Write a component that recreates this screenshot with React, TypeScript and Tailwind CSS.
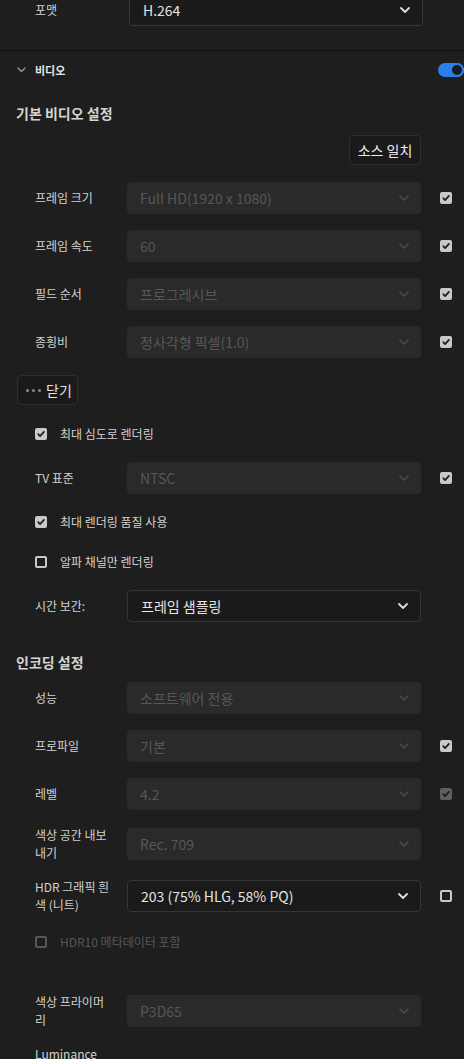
import type { ReactNode } from 'react'

/**
 * Export settings — video panel (dark, Korean UI).
 */

function Chevron({ bright }: { bright?: boolean }) {
  return (
    <svg width="10" height="6" viewBox="0 0 10 6" className={bright ? 'text-[#dcdcdc]' : 'text-[#4e4e4e]'}>
      <path d="M1 1l4 4 4-4" fill="none" stroke="currentColor" strokeWidth={bright ? 1.8 : 1.5} strokeLinecap="round" strokeLinejoin="round" />
    </svg>
  )
}

function Select({ value, disabled, className = '' }: { value: ReactNode; disabled?: boolean; className?: string }) {
  return (
    <div
      className={`w-[294px] h-[32px] shrink-0 flex items-center justify-between pl-[13px] pr-[12px] rounded-[4px] text-[14px] leading-[20px] ${
        disabled
          ? 'bg-[#2a2a2a] text-[#575757]'
          : 'bg-[#1a1a1a] border border-[#363636] text-[#e4e4e4]'
      } ${className}`}
    >
      <span className="truncate">{value}</span>
      <Chevron bright={!disabled} />
    </div>
  )
}

function Check({ checked, disabled }: { checked?: boolean; disabled?: boolean }) {
  if (!checked) {
    return (
      <div
        className={`w-[12px] h-[12px] shrink-0 rounded-[2px] border-2 ${
          disabled ? 'border-[#565656]' : 'border-[#c9c9c9]'
        }`}
      />
    )
  }
  return (
    <div
      className={`w-[12px] h-[12px] shrink-0 rounded-[2px] flex items-center justify-center ${
        disabled ? 'bg-[#5f5f5f]' : 'bg-[#c9c9c9]'
      }`}
    >
      <svg width="10" height="10" viewBox="0 0 10 10">
        <path d="M2.2 5.2l1.9 1.9L7.9 2.9" fill="none" stroke="#1c1c1c" strokeWidth="1.7" strokeLinecap="round" strokeLinejoin="round" />
      </svg>
    </div>
  )
}

function Row({
  label,
  value,
  disabled = true,
  check,
  className = '',
}: {
  label: ReactNode
  value: ReactNode
  disabled?: boolean
  check?: { checked: boolean; disabled?: boolean }
  className?: string
}) {
  // fixed 32px row: two-line labels overflow evenly above and below
  return (
    <div className={`flex items-center h-[32px] pl-[35px] ${className}`}>
      <div className="w-[92px] shrink-0 text-[12px] leading-[18px] text-[#d2d2d2]">{label}</div>
      <Select value={value} disabled={disabled} />
      {check && (
        <div className="ml-[19px]">
          <Check checked={check.checked} disabled={check.disabled} />
        </div>
      )}
    </div>
  )
}

function CheckRow({ label, checked, disabled, className = '' }: { label: string; checked?: boolean; disabled?: boolean; className?: string }) {
  return (
    <div className={`flex items-center h-[20px] pl-[35px] ${className}`}>
      <Check checked={checked} disabled={disabled} />
      <span className={`ml-[13px] text-[12px] leading-[18px] ${disabled ? 'text-[#575757]' : 'text-[#d2d2d2]'}`}>
        {label}
      </span>
    </div>
  )
}

function SectionTitle({ children, className = '' }: { children: ReactNode; className?: string }) {
  return (
    <div className={`pl-[16px] h-[20px] flex items-center text-[14px] leading-[20px] font-bold text-[#d4d4d4] ${className}`}>
      {children}
    </div>
  )
}

export default function App() {
  return (
    <div className="w-full h-[1059px] overflow-hidden bg-[#1e1e1e] font-['Noto_Sans_CJK_KR','Noto_Sans',sans-serif]">
      {/* Format */}
      <div className="flex items-center pl-[35px] -mt-[6px]">
        <div className="w-[94px] shrink-0 text-[12px] leading-[18px] text-[#d2d2d2]">포맷</div>
        <Select value="H.264" />
      </div>

      <div className="mt-[24px] h-px bg-[#0e0e0e]" />

      {/* Video header */}
      <div className="mt-[9px] h-[20px] flex items-center pl-[17px]">
        <svg width="9" height="6" viewBox="0 0 9 6" className="text-[#8c8c8c]">
          <path d="M1 1l3.5 3.5L8 1" fill="none" stroke="currentColor" strokeWidth="1.5" strokeLinecap="round" strokeLinejoin="round" />
        </svg>
        <span className="ml-[9px] text-[11px] font-bold text-[#e6e6e6]">비디오</span>
        <div className="ml-auto w-[26px] h-[14px] rounded-full bg-[#2a7fe8] flex items-center justify-end">
          <div className="w-[14px] h-[14px] rounded-full border-2 border-[#2a7fe8] bg-[#1a1a1a]" />
        </div>
      </div>

      <SectionTitle className="mt-[23px]">기본 비디오 설정</SectionTitle>

      <div className="mt-[12px] flex justify-end pr-[43px]">
        <button className="w-[72px] h-[30px] rounded-[4px] bg-[#1a1a1a] border border-[#2f2f2f] text-[14px] text-[#ececec]">
          소스 일치
        </button>
      </div>

      <div className="mt-[17px] flex flex-col gap-[16px]">
        <Row label="프레임 크기" value="Full HD(1920 x 1080)" check={{ checked: true }} />
        <Row label="프레임 속도" value="60" check={{ checked: true }} />
        <Row label="필드 순서" value="프로그레시브" check={{ checked: true }} />
        <Row label="종횡비" value="정사각형 픽셀(1.0)" check={{ checked: true }} />
      </div>

      <div className="mt-[17px] pl-[17px]">
        <button className="w-[61px] h-[30px] rounded-[4px] bg-[#1a1a1a] border border-[#2f2f2f] flex items-center pl-[8px]">
          <span className="flex gap-[3px]">
            <span className="w-[3px] h-[3px] rounded-full bg-[#8a8a8a]" />
            <span className="w-[3px] h-[3px] rounded-full bg-[#8a8a8a]" />
            <span className="w-[3px] h-[3px] rounded-full bg-[#8a8a8a]" />
          </span>
          <span className="ml-[5px] text-[14px] leading-[20px] text-[#e4e4e4]">닫기</span>
        </button>
      </div>

      <CheckRow className="mt-[19px]" label="최대 심도로 렌더링" checked />
      <Row className="mt-[18px]" label="TV 표준" value="NTSC" check={{ checked: true }} />
      <CheckRow className="mt-[18px]" label="최대 렌더링 품질 사용" checked />
      <CheckRow className="mt-[20px]" label="알파 채널만 렌더링" />
      <Row className="mt-[18px]" label="시간 보간:" value="프레임 샘플링" disabled={false} />

      <SectionTitle className="mt-[30px]">인코딩 설정</SectionTitle>

      <div className="mt-[10px] flex flex-col gap-[16px]">
        <Row label="성능" value="소프트웨어 전용" />
        <Row label="프로파일" value="기본" check={{ checked: true }} />
        <Row label="레벨" value="4.2" check={{ checked: true, disabled: true }} />
      </div>

      <Row
        className="mt-[18px]"
        label={<>색상 공간 내보<br />내기</>}
        value="Rec. 709"
      />
      <Row
        className="mt-[20px]"
        label={<>HDR 그래픽 흰<br />색 (니트)</>}
        value="203 (75% HLG, 58% PQ)"
        disabled={false}
        check={{ checked: false }}
      />
      <CheckRow className="mt-[20px]" label="HDR10 메타데이터 포함" disabled />

      <Row
        className="mt-[43px]"
        label={<>색상 프라이머<br />리</>}
        value="P3D65"
      />

      <div className="mt-[18px] pl-[35px] text-[12px] leading-[18px] text-[#d2d2d2]">Luminance</div>
    </div>
  )
}
